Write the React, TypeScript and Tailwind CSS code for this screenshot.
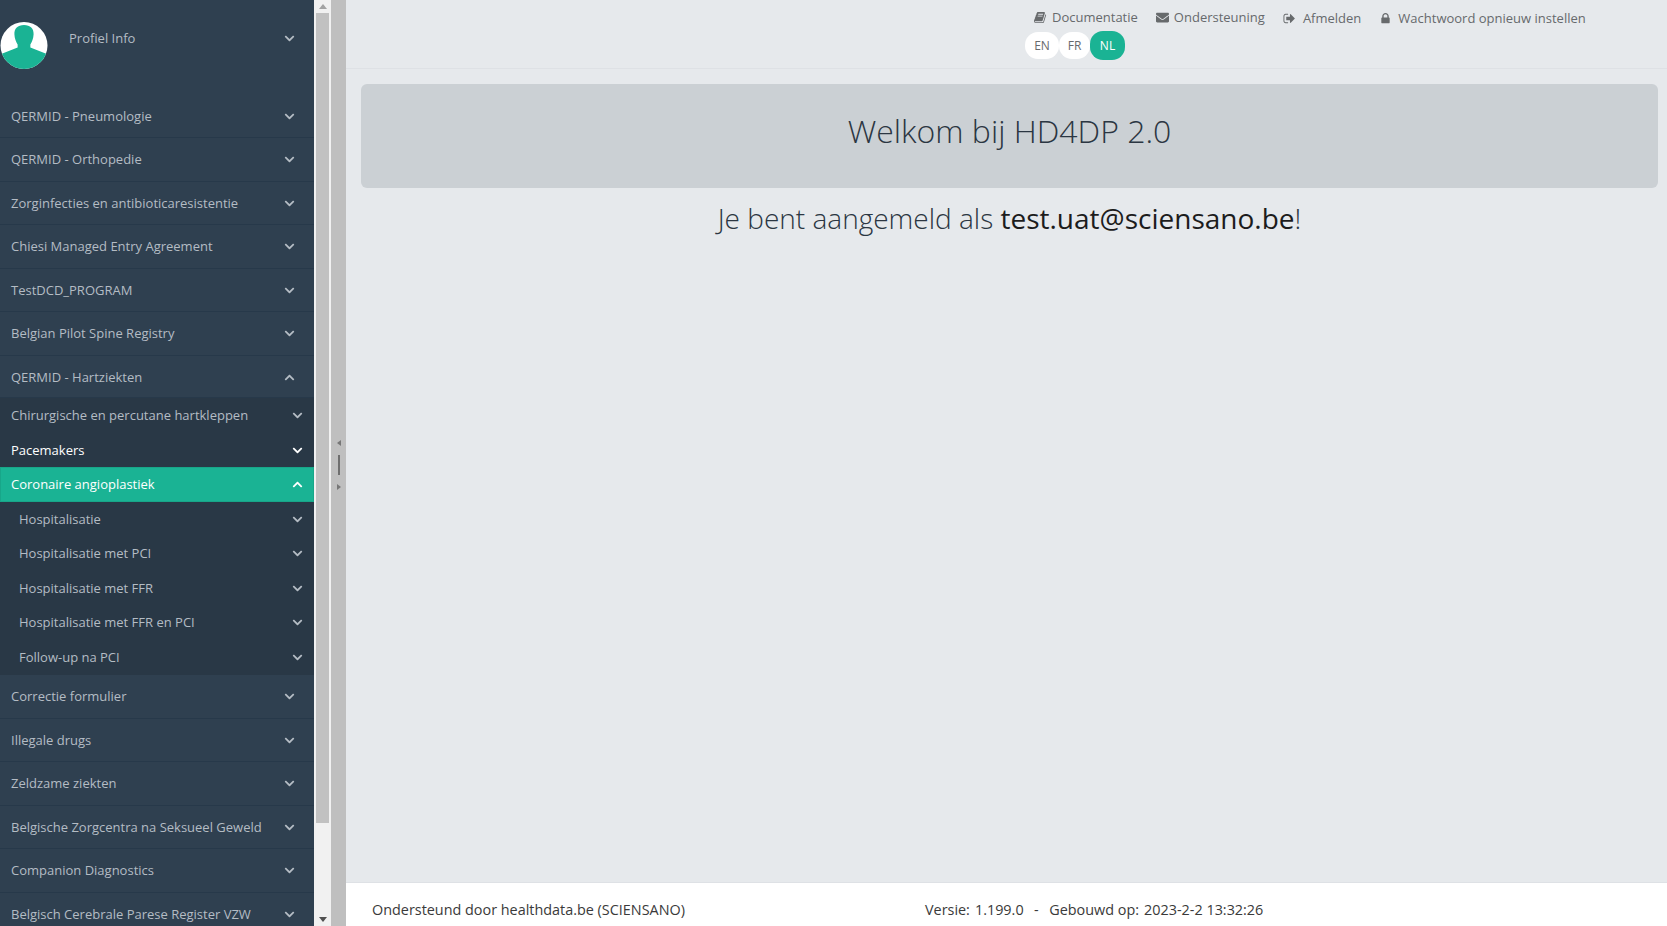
import type { ReactNode } from "react";
import { FaChevronDown, FaChevronUp, FaEnvelope } from "react-icons/fa";

const forms = [
  "Hospitalisatie",
  "Hospitalisatie met PCI",
  "Hospitalisatie met FFR",
  "Hospitalisatie met FFR en PCI",
  "Follow-up na PCI",
];

// old font awesome glyphs, the current package only has the newer shapes
const BookIcon = () => (
  <svg viewBox="0 0 1792 1792" className="h-[13px] w-[13px]" fill="currentColor">
    <path d="M1639 478q40 57 18 129l-275 906q-19 64-76.500 107.500t-122.500 43.500h-923q-77 0-148.500-53.500t-99.500-131.500q-24-67-2-127 0-4 3-27t4-37q1-8-3-21.500t-3-19.500q2-11 8-21t16.500-23.500 16.500-23.500q23-38 45-91.500t30-91.500q3-10 .5-30t-.5-28q3-11 17-28t17-23q21-36 42-92t25-90q1-9-2.500-32t.5-28q4-13 22-30.500t22-22.500q19-26 42.500-84.500t27.500-96.500q1-8-3-25.500t-2-26.500q2-8 9-18t18-23 17-21q8-12 16.500-30.500t15-35 16-36 19.500-32 26.500-23.500 36-11.500 47.500 5.500l-1 3q38-9 51-9h761q74 0 114 56t18 130l-274 906q-36 119-71.500 153.500t-128.500 34.500h-869q-27 0-38 15-11 16-1 43 24 70 144 70h923q29 0 56-15.500t35-41.500l300-987q7-22 5-57 38 15 59 43zm-1064 2q-4 13 2 22.500t20 9.500h608q13 0 25.500-9.500t16.500-22.500l21-64q4-13-2-22.500t-20-9.500h-608q-13 0-25.500 9.500t-16.500 22.500zm-83 256q-4 13 2 22.500t20 9.500h608q13 0 25.500-9.500t16.500-22.500l21-64q4-13-2-22.500t-20-9.500h-608q-13 0-25.500 9.500t-16.500 22.500z" />
  </svg>
);

const SignOutIcon = () => (
  <svg viewBox="0 0 1792 1792" className="h-[13px] w-[13px]" fill="currentColor">
    <path d="M704 1440q0 4 1 20t.5 26.500-3 23.500-10 19.500-20.500 6.500h-320q-119 0-203.500-84.500t-84.500-203.500v-704q0-119 84.500-203.500t203.500-84.500h320q13 0 22.500 9.500t9.500 22.500q0 4 1 20t.5 26.500-3 23.500-10 19.500-20.500 6.500h-320q-66 0-113 47t-47 113v704q0 66 47 113t113 47h312l11.500 1 11.500 3 8 5.500 7 9 2 13.500zm928-544q0 26-19 45l-544 544q-19 19-45 19t-45-19-19-45v-288h-448q-26 0-45-19t-19-45v-384q0-26 19-45t45-19h448v-288q0-26 19-45t45-19 45 19l544 544q19 19 19 45z" />
  </svg>
);

const LockIcon = () => (
  <svg viewBox="0 0 1792 1792" className="h-[13px] w-[13px]" fill="currentColor">
    <path d="M640 768h512v-192q0-106-75-181t-181-75-181 75-75 181v192zm832 96v576q0 40-28 68t-68 28h-960q-40 0-68-28t-28-68v-576q0-40 28-68t68-28h32v-192q0-184 132-316t316-132 316 132 132 316v192h32q40 0 68 28t28 68z" />
  </svg>
);

const MenuRow = ({ label, open, className }: { label: string; open?: boolean; className: string }) => (
  <div className={`flex shrink-0 items-center justify-between border-b border-[#27394a] pl-[11px] pr-[19px] leading-5 ${className}`}>
    <span>{label}</span>
    {open ? <FaChevronUp className="text-[11px]" /> : <FaChevronDown className="text-[11px]" />}
  </div>
);

const SubRow = ({ label, className, open }: { label: string; className: string; open?: boolean }) => (
  <div className={`flex shrink-0 items-center justify-between leading-5 ${className}`}>
    <span>{label}</span>
    {open ? <FaChevronUp className="text-[11px]" /> : <FaChevronDown className="text-[11px]" />}
  </div>
);

const Sidebar = () => (
  <div className="flex h-[926px] w-[314px] shrink-0 flex-col overflow-hidden bg-[#2f4050] text-[13px] text-[#b4bcc4]">
    <div className="flex h-[95px] shrink-0 items-start justify-between pr-[19px]">
      <div className="flex items-start">
        <svg viewBox="0 0 48 48" className="mt-[22px] h-[47px] w-[48px]">
          <clipPath id="avatar">
            <circle cx="24" cy="24" r="24" />
          </clipPath>
          <circle cx="24" cy="24" r="24" fill="#fff" />
          <g clipPath="url(#avatar)" fill="#1ab394">
            <path d="M24 3c-6.500 0-10 3.500-9.800 9.500.1 4 1.800 8 3.300 10.500v3L0 33v15h48V33l-17.500-7v-3c1.500-2.500 3.200-6.500 3.300-10.500C34 6.500 30.500 3 24 3z" />
          </g>
        </svg>
        <span className="ml-[21px] mt-[29px]">Profiel Info</span>
      </div>
      <FaChevronDown className="mt-[33px] text-[11px]" />
    </div>
    <MenuRow label="QERMID - Pneumologie" className="h-[43px]" />
    <MenuRow label="QERMID - Orthopedie" className="h-[44px] pb-px" />
    <MenuRow label="Zorginfecties en antibioticaresistentie" className="h-[43px]" />
    <MenuRow label="Chiesi Managed Entry Agreement" className="h-[44px] pb-px" />
    <MenuRow label="TestDCD_PROGRAM" className="h-[43px]" />
    <MenuRow label="Belgian Pilot Spine Registry" className="h-[44px] pb-px" />
    <MenuRow label="QERMID - Hartziekten" open className="h-[42px] pt-px" />
    <div className="flex shrink-0 flex-col bg-[#293846]">
      <SubRow label="Chirurgische en percutane hartkleppen" className="h-[35px] pb-px pl-[11px] pr-[11px]" />
      <SubRow label="Pacemakers" className="h-[34px] pl-[11px] pr-[11px] text-white" />
      <SubRow label="Coronaire angioplastiek" className="h-[35px] border border-[#18a689] bg-[#1ab394] pb-px pl-[10px] pr-[10px] text-white" open />
      <SubRow label={forms[0]} className="h-[34px] pl-[19px] pr-[11px]" />
      <SubRow label={forms[1]} className="h-[35px] pb-px pl-[19px] pr-[11px]" />
      <SubRow label={forms[2]} className="h-[34px] pl-[19px] pr-[11px]" />
      <SubRow label={forms[3]} className="h-[35px] pb-px pl-[19px] pr-[11px]" />
      <SubRow label={forms[4]} className="h-[35px] pb-px pl-[19px] pr-[11px]" />
    </div>
    <MenuRow label="Correctie formulier" className="h-[44px] pb-px" />
    <MenuRow label="Illegale drugs" className="h-[43px]" />
    <MenuRow label="Zeldzame ziekten" className="h-[44px] pb-px" />
    <MenuRow label="Belgische Zorgcentra na Seksueel Geweld" className="h-[43px]" />
    <MenuRow label="Companion Diagnostics" className="h-[44px] pb-px" />
    <MenuRow label="Belgisch Cerebrale Parese Register VZW" className="h-[43px]" />
  </div>
);

const Scrollbar = () => (
  <div className="flex h-[926px] w-[17px] shrink-0 flex-col items-center bg-[#f1f1f1]">
    <div className="flex h-[13px] items-center">
      <div className="h-0 w-0 border-x-[4px] border-b-[5px] border-x-transparent border-b-[#a3a3a3]" />
    </div>
    <div className="h-[810px] w-[13px] bg-[#c1c1c1]" />
    <div className="flex-1" />
    <div className="flex h-[13px] items-center">
      <div className="h-0 w-0 border-x-[4px] border-t-[5px] border-x-transparent border-t-[#505050]" />
    </div>
  </div>
);

const Splitter = () => (
  <div className="flex h-[926px] w-[15px] shrink-0 flex-col items-center justify-center gap-[9px] bg-[#bfbfbf] pt-[4px]">
    <div className="h-0 w-0 border-y-[3px] border-r-[4px] border-y-transparent border-r-[#777]" />
    <div className="h-[20px] w-[2px] bg-[#6f6f6f]" />
    <div className="h-0 w-0 border-y-[3px] border-l-[4px] border-y-transparent border-l-[#777]" />
  </div>
);

const TopLink = ({ icon, label, gap, className = "" }: { icon: ReactNode; label: string; gap: string; className?: string }) => (
  <span className={`flex items-center ${gap} ${className}`}>
    {icon}
    {label}
  </span>
);

const TopBar = () => (
  <div className="h-[69px] shrink-0 border-b border-[#dee1e5] pl-[688px] text-[13px] text-[#676a6c]">
    <div className="flex h-[35px] items-center gap-[18px]">
      <TopLink icon={<BookIcon />} label="Documentatie" gap="gap-[5px]" />
      <TopLink icon={<FaEnvelope className="text-[13px]" />} label="Ondersteuning" gap="gap-[5px]" />
      <TopLink icon={<SignOutIcon />} label="Afmelden" gap="gap-[7px]" className="pt-[2px]" />
      <TopLink icon={<LockIcon />} label="Wachtwoord opnieuw instellen" gap="gap-[6px]" className="pt-[2px]" />
    </div>
    <div className="-ml-[9px] -mt-[4px] flex items-center text-[12px]">
      <span className="flex h-[27px] w-[34px] items-center justify-center rounded-[13px] bg-white">EN</span>
      <span className="flex h-[27px] w-[31px] items-center justify-center rounded-[13px] bg-white">FR</span>
      <span className="flex h-[29px] w-[35px] items-center justify-center rounded-[13px] bg-[#1ab394] text-white">NL</span>
    </div>
  </div>
);

const Main = () => (
  <div className="flex h-[926px] min-w-0 flex-1 flex-col bg-[#e6e9ec]">
    <TopBar />
    <div className="flex-1 pl-[15px] pr-[9px] pt-[15px] text-center">
      <div className="flex h-[104px] items-start justify-center rounded-[6px] bg-[#cbd0d4] pt-[24px] text-[32px] font-light leading-[46px] text-[#2b3642]">
        Welkom bij HD4DP 2.0
      </div>
      <div className="mt-[10px] text-[28px] font-light leading-[40px] text-[#2b3642]">
        Je bent aangemeld als <span className="font-normal text-[#1c1c1c]">test.uat@sciensano.be</span>!
      </div>
    </div>
    <div className="flex h-[44px] shrink-0 items-center border-t border-[#dee1e5] bg-white pl-[26px] pt-[11px] text-[14.4px] text-[#3a3a3a]">
      <span className="w-[553px]">Ondersteund door healthdata.be (SCIENSANO)</span>
      <span className="whitespace-pre">
        Versie:<span className="ml-[5px]">1.199.0</span>
        <span className="mx-[10.5px]">-</span>
        Gebouwd op:<span className="ml-[5px]">2023-2-2 13:32:26</span>
      </span>
    </div>
  </div>
);

const App = () => {
  return (
    <div className="flex h-[926px] w-[1667px] overflow-hidden font-['Open_Sans',sans-serif]">
      <Sidebar />
      <Scrollbar />
      <Splitter />
      <Main />
    </div>
  );
};

export default App;
